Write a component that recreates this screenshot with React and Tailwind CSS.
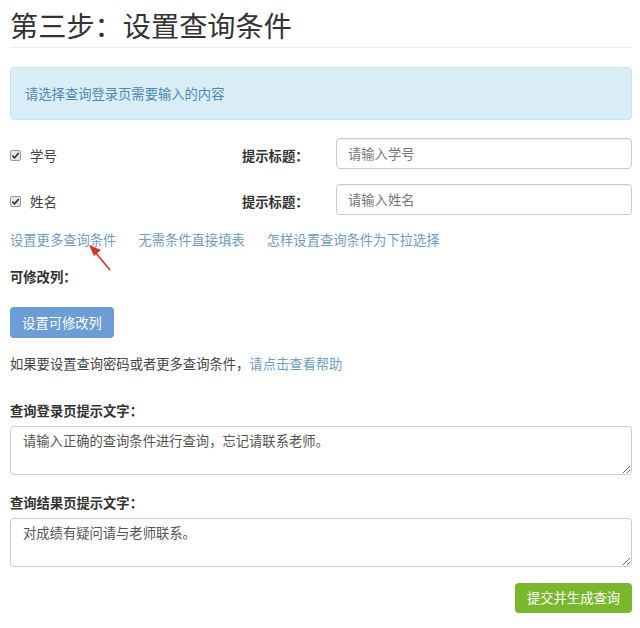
import React from "react";

function Check() {
  return (
    <span className="inline-flex w-[11px] h-[11px] items-center justify-center border border-[#9a9a9a] bg-[#e6e6e6] rounded-[2px]">
      <svg width="9" height="9" viewBox="0 0 10 10">
        <path d="M1.5 5.2 L4 7.6 L8.6 2.2" fill="none" stroke="#333" strokeWidth="1.8" />
      </svg>
    </span>
  );
}

function Row({ label, ph, mt }) {
  return (
    <div className={`flex items-center h-[31px] ${mt}`}>
      <div className="w-[232px] flex items-center gap-[9px] text-[13.5px] text-[#444] pt-[4px]">
        <Check />
        <span>{label}</span>
      </div>
      <div className="w-[94px] text-[13.3px] font-bold text-[#333] pt-[4px]">提示标题：</div>
      <div className="flex-1 h-[31px] border border-[#ccc] rounded-[4px] flex items-center px-[11px] text-[13.3px] text-[#777] shadow-[inset_0_1px_1px_rgba(0,0,0,0.06)]">
        {ph}
      </div>
    </div>
  );
}

export default function App() {
  return (
    <div
      className="relative w-[640px] h-[628px] bg-white pl-[10px] pr-[8px] flex flex-col text-[#333]"
      style={{ fontFamily: '"Noto Sans CJK SC", "Noto Sans", sans-serif' }}
    >
      <div className="h-[48px] pt-[10px] border-b border-[#eee] text-[28.2px] leading-[30px] text-[#333]">
        第三步：设置查询条件
      </div>
      <div className="mt-[19px] h-[53px] flex items-center pl-[14px] border border-[#c3e6f0] bg-[#d9edf7] rounded-[4px] text-[13.3px] text-[#4d88ad]">
        请选择查询登录页需要输入的内容
      </div>
      <Row label="学号" ph="请输入学号" mt="mt-[18px]" />
      <Row label="姓名" ph="请输入姓名" mt="mt-[15px]" />
      <div className="mt-[15px] h-[20px] flex items-center gap-[22px] text-[13.3px] leading-[20px] text-[#6f9cc4]">
        <span>设置更多查询条件</span>
        <span>无需条件直接填表</span>
        <span>怎样设置查询条件为下拉选择</span>
      </div>
      <div className="mt-[17px] h-[20px] leading-[20px] text-[13.3px] font-bold">可修改列：</div>
      <div className="mt-[20px] w-[104px] h-[31px] rounded-[4px] bg-[#6d9dd5] text-white text-[13.3px] flex items-center justify-center">
        设置可修改列
      </div>
      <div className="mt-[16px] h-[20px] leading-[20px] text-[13.3px] text-[#444]">
        如果要设置查询密码或者更多查询条件，<span className="text-[#6f9cc4]">请点击查看帮助</span>
      </div>
      <div className="mt-[27px] h-[20px] leading-[20px] text-[13.3px] font-bold">查询登录页提示文字：</div>
      <textarea
        readOnly
        defaultValue="请输入正确的查询条件进行查询，忘记请联系老师。"
        className="mt-[5px] h-[49px] w-full border border-[#ccc] rounded-[4px] px-[12px] pt-[4px] text-[13.3px] leading-[20px] text-[#555] outline-none"
      />
      <div className="mt-[18px] h-[20px] leading-[20px] text-[13.3px] font-bold">查询结果页提示文字：</div>
      <textarea
        readOnly
        defaultValue="对成绩有疑问请与老师联系。"
        className="mt-[5px] h-[49px] w-full border border-[#ccc] rounded-[4px] px-[12px] pt-[4px] text-[13.3px] leading-[20px] text-[#555] outline-none"
      />
      <div className="mt-[16px] self-end w-[117px] h-[30px] rounded-[4px] bg-[#79b72c] text-white text-[13.3px] flex items-center justify-center">
        提交并生成查询
      </div>
      <svg className="absolute left-0 top-0 pointer-events-none" width="640" height="628">
        <line x1="110" y1="270" x2="95" y2="252" stroke="#d9302c" strokeWidth="1.6" />
        <polygon points="89,245 101,250 94,256" fill="#d9302c" />
      </svg>
    </div>
  );
}
